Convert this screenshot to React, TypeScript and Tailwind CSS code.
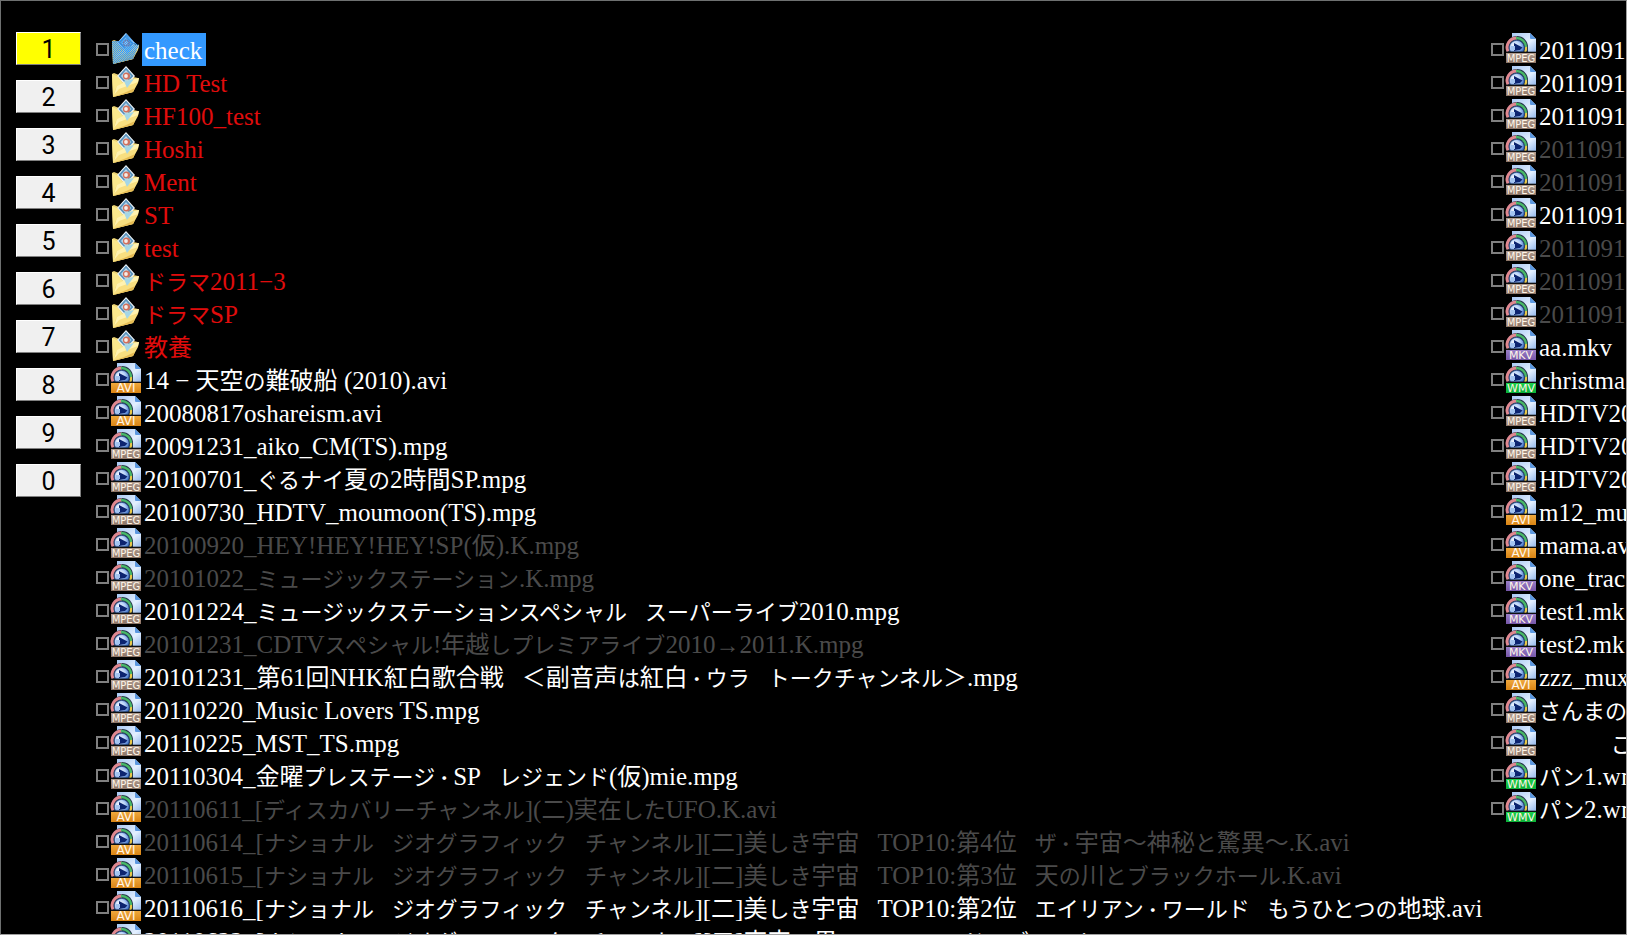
import { useState } from "react";
import { clsx } from "clsx";

type Kind = "folder" | "AVI" | "MPEG" | "MKV" | "WMV";
type Entry = { name: string; kind: Kind; dim?: boolean };

const folder = (name: string): Entry => ({ name, kind: "folder" });
const file = (kind: Kind, name: string, dim = false): Entry => ({ name, kind, dim });

const mainColumn: Entry[] = [
  folder("check"),
  folder("HD Test"),
  folder("HF100_test"),
  folder("Hoshi"),
  folder("Ment"),
  folder("ST"),
  folder("test"),
  folder("ドラマ2011−3"),
  folder("ドラマSP"),
  folder("教養"),
  file("AVI", "14 − 天空の難破船 (2010).avi"),
  file("AVI", "20080817oshareism.avi"),
  file("MPEG", "20091231_aiko_CM(TS).mpg"),
  file("MPEG", "20100701_ぐるナイ夏の2時間SP.mpg"),
  file("MPEG", "20100730_HDTV_moumoon(TS).mpg"),
  file("MPEG", "20100920_HEY!HEY!HEY!SP(仮).K.mpg", true),
  file("MPEG", "20101022_ミュージックステーション.K.mpg", true),
  file("MPEG", "20101224_ミュージックステーションスペシャル　スーパーライブ2010.mpg"),
  file("MPEG", "20101231_CDTVスペシャル!年越しプレミアライブ2010→2011.K.mpg", true),
  file("MPEG", "20101231_第61回NHK紅白歌合戦　＜副音声は紅白・ウラ　トークチャンネル＞.mpg"),
  file("MPEG", "20110220_Music Lovers TS.mpg"),
  file("MPEG", "20110225_MST_TS.mpg"),
  file("MPEG", "20110304_金曜プレステージ・SP　レジェンド(仮)mie.mpg"),
  file("AVI", "20110611_[ディスカバリーチャンネル](二)実在したUFO.K.avi", true),
  file("AVI", "20110614_[ナショナル　ジオグラフィック　チャンネル][二]美しき宇宙　TOP10:第4位　ザ・宇宙～神秘と驚異～.K.avi", true),
  file("AVI", "20110615_[ナショナル　ジオグラフィック　チャンネル][二]美しき宇宙　TOP10:第3位　天の川とブラックホール.K.avi", true),
  file("AVI", "20110616_[ナショナル　ジオグラフィック　チャンネル][二]美しき宇宙　TOP10:第2位　エイリアン・ワールド　もうひとつの地球.avi"),
  file("AVI", "20110622_[ナショナル　ジオグラフィック　チャンネル][二]宇宙の果て　スペースドラブラ.avi"),
];

const sideColumn: Entry[] = [
  file("MPEG", "2011091"),
  file("MPEG", "2011091"),
  file("MPEG", "2011091"),
  file("MPEG", "2011091", true),
  file("MPEG", "2011091", true),
  file("MPEG", "2011091"),
  file("MPEG", "2011091", true),
  file("MPEG", "2011091", true),
  file("MPEG", "2011091", true),
  file("MKV", "aa.mkv"),
  file("WMV", "christma"),
  file("MPEG", "HDTV20"),
  file("MPEG", "HDTV20"),
  file("MPEG", "HDTV20"),
  file("AVI", "m12_mux"),
  file("AVI", "mama.av"),
  file("MKV", "one_trac"),
  file("MKV", "test1.mk"),
  file("MKV", "test2.mk"),
  file("AVI", "zzz_mux"),
  file("MPEG", "さんまの"),
  file("MPEG", "　　　　ご"),
  file("WMV", "パン1.wm"),
  file("WMV", "パン2.wm"),
];

const pages = ["1", "2", "3", "4", "5", "6", "7", "8", "9", "0"];

const badge: Record<string, { top: string; bottom: string; size: number }> = {
  AVI: { top: "#f0a83c", bottom: "#d98414", size: 12 },
  MPEG: { top: "#b09c90", bottom: "#8c7466", size: 10 },
  MKV: { top: "#9a80c8", bottom: "#7656a8", size: 11 },
  WMV: { top: "#1ccf4a", bottom: "#0cb038", size: 11 },
};

// Spaces and dots, kana and kanji each get their own size, as in a proportional Japanese face.
const scriptRuns = /([\u3000・]+|[\u3040-\u30fa\u30fc-\u30ff]+|[\u3400-\u9fff\uff00-\uff5f→]+)/;

function Name({ text }: { text: string }) {
  return text.split(scriptRuns).map((run, i) => {
    if (/^[\u3000・]/.test(run)) {
      return <span key={i} className="text-[18px] leading-none">{run}</span>;
    }
    if (/^[\u3040-\u30ff]/.test(run)) {
      return <span key={i} className="text-[22px] leading-none">{run}</span>;
    }
    if (/^[\u3400-\u9fff\uff00-\uff5f→]/.test(run)) {
      return <span key={i} className="text-[24px] leading-none">{run}</span>;
    }
    return run;
  });
}

function FolderIcon({ selected }: { selected: boolean }) {
  return (
    <svg width="30" height="32" viewBox="0 0 30 32" className="shrink-0" aria-hidden="true">
      <path d="M1 8 L3 7 L8 9 L13 9 L27 12 L22 26 L2 31 Z" fill="#ecd272" />
      <path d="M15 0 L24 10 L15 20 L6 10 Z" fill="#f2f8fc" />
      <path d="M15 1.500 L22.500 10 L15 18 L7.500 10 Z" fill="#5b93bc" />
      <path d="M15 4 L20 10 L15 16 L10 10 Z" fill="#b8d8ee" />
      <circle cx="15.500" cy="10" r="3.600" fill="#d0705c" />
      <circle cx="15" cy="10" r="1.900" fill="#f6ece8" />
      <path d="M1 8 L6 10 L10 15 L12 18 L5 22 L2 31 Z" fill="#fbe88c" />
      <path d="M2 31 L6 20 L12 17 L17 14 L28 12 L27 17 L22 26 Z" fill="#f8df80" />
      <path d="M6 20 L12 17 L17 14 L28 12 L27 16 L16 20 L8 23 L3 29 Z" fill="#fff2b0" />
      <path d="M13 15 L23 13 L16 22 Z" fill="#a4d6e6" />
      <path d="M2 31 L22 26 L24 22 L13 27 Z" fill="#e6bc54" />
      {selected && (
        <>
          <defs>
            <pattern id="dither" width="2" height="2" patternUnits="userSpaceOnUse">
              <rect width="1" height="1" fill="#3399ff" />
              <rect x="1" y="1" width="1" height="1" fill="#3399ff" />
            </pattern>
          </defs>
          <path d="M15 0 L23 9 L28 12 L22 26 L2 31 L1 8 L8 8 Z" fill="#2080c8" fillOpacity="0.35" />
          <path d="M15 0 L23 9 L28 12 L22 26 L2 31 L1 8 L8 8 Z" fill="url(#dither)" />
        </>
      )}
    </svg>
  );
}

function MediaIcon({ kind }: { kind: Kind }) {
  const { top, bottom, size } = badge[kind];
  return (
    <svg width="30" height="30" viewBox="0 0 30 30" className="shrink-0 overflow-visible" aria-hidden="true">
      <defs>
        <linearGradient id="sheet" x1="0" y1="0" x2="1" y2="1">
          <stop offset="0" stopColor="#a8c8f4" />
          <stop offset="0.6" stopColor="#e4f0ff" />
          <stop offset="1" stopColor="#94b8ec" />
        </linearGradient>
        <radialGradient id="ball" cx="0.35" cy="0.45" r="0.7">
          <stop offset="0" stopColor="#ffffff" />
          <stop offset="0.55" stopColor="#b4d0f8" />
          <stop offset="1" stopColor="#3c70c8" />
        </radialGradient>
        <linearGradient id={`badge-${kind}`} x1="0" y1="0" x2="0" y2="1">
          <stop offset="0" stopColor={top} />
          <stop offset="1" stopColor={bottom} />
        </linearGradient>
      </defs>
      <path d="M6 0 H24 L30 6 V19 H6 Z" fill="url(#sheet)" />
      <path d="M24 0 L30 6 H25 Q24 6 24 5 Z" fill="#5c98e0" />
      <path d="M0 19 V14 A11 11 0 0 1 22 14 V19 Z" fill="#24344a" />
      <path d="M2 18.500 A9.500 9.500 0 0 1 11 5" stroke="#e08890" strokeWidth="3" fill="none" />
      <path d="M10 5 A9.500 9.500 0 0 1 20 14" stroke="#48b868" strokeWidth="2.400" fill="none" />
      <path d="M20 14 Q20.500 17 19 19" stroke="#e8c848" strokeWidth="2.200" fill="none" />
      <path d="M4.500 19 A7.500 7.500 0 1 1 17 19 Z" fill="url(#ball)" stroke="#284880" strokeWidth="0.800" />
      <path d="M8 10 L16.500 14.500 L14 17 L8 18 Z" fill="#0c2470" />
      <path d="M4.500 13 H9 V17 H4.500 Z" fill="#a4c4f0" />
      <rect y="18.700" width="30" height="1.300" fill="#101010" />
      <rect y="20" width="30" height="10" fill={`url(#badge-${kind})`} />
      <text
        x="15"
        y="29"
        textAnchor="middle"
        fontSize={size}
        fontFamily="DejaVu Sans, sans-serif"
        fill="#fff6e8"
      >
        {kind}
      </text>
    </svg>
  );
}

function FileRow({ entry, selected = false }: { entry: Entry; selected?: boolean }) {
  const isFolder = entry.kind === "folder";
  return (
    <li>
      <label className="flex h-[33px] w-max items-start">
        <input
          type="checkbox"
          className="mt-[10px] mr-[2px] size-[13px] shrink-0 appearance-none border-2 border-[#808080] bg-black checked:bg-[#808080]"
        />
        {isFolder ? <FolderIcon selected={selected} /> : <MediaIcon kind={entry.kind} />}
        <span
          className={clsx(
            "ml-px h-[33px] pt-[2px] pr-1 pl-[2px] leading-[31px] whitespace-pre",
            selected && "bg-[#3399ff] text-white",
            !selected && isFolder && "text-[#e00c0c]",
            !selected && !isFolder && (entry.dim ? "text-[#4a4a4a]" : "text-white")
          )}
        >
          <Name text={entry.name} />
        </span>
      </label>
    </li>
  );
}

export default function App() {
  const [page, setPage] = useState("1");

  return (
    <div className="flex h-screen overflow-hidden border border-[#6e7070] border-r-[#a0a0a0] border-b-[#a0a0a0] bg-black">
      <nav className="flex w-20 shrink-0 flex-col gap-[15px] pt-[31px] pl-[15px] font-[Roboto,sans-serif]">
        {pages.map((p) => (
          <button
            key={p}
            type="button"
            onClick={() => setPage(p)}
            className={clsx(
              "h-[33px] border border-t-white border-r-[#808080] border-b-[#808080] border-l-white pt-[2px] text-[25px] leading-[29px] text-black",
              p === page ? "bg-[#ffff00]" : "bg-[#f0f0f0]"
            )}
          >
            {p}
          </button>
        ))}
      </nav>

      <main className="flex min-w-0 flex-1 pt-8 pl-[15px] font-['Liberation_Serif','Noto_Sans_CJK_JP',serif] text-[25px]">
        <ul className="min-w-0 flex-1">
          {mainColumn.map((entry, i) => (
            <FileRow key={entry.name} entry={entry} selected={i === 0} />
          ))}
        </ul>
        <ul className="w-[135px] shrink-0 overflow-hidden">
          {sideColumn.map((entry, i) => (
            <FileRow key={i} entry={entry} />
          ))}
        </ul>
      </main>
    </div>
  );
}
